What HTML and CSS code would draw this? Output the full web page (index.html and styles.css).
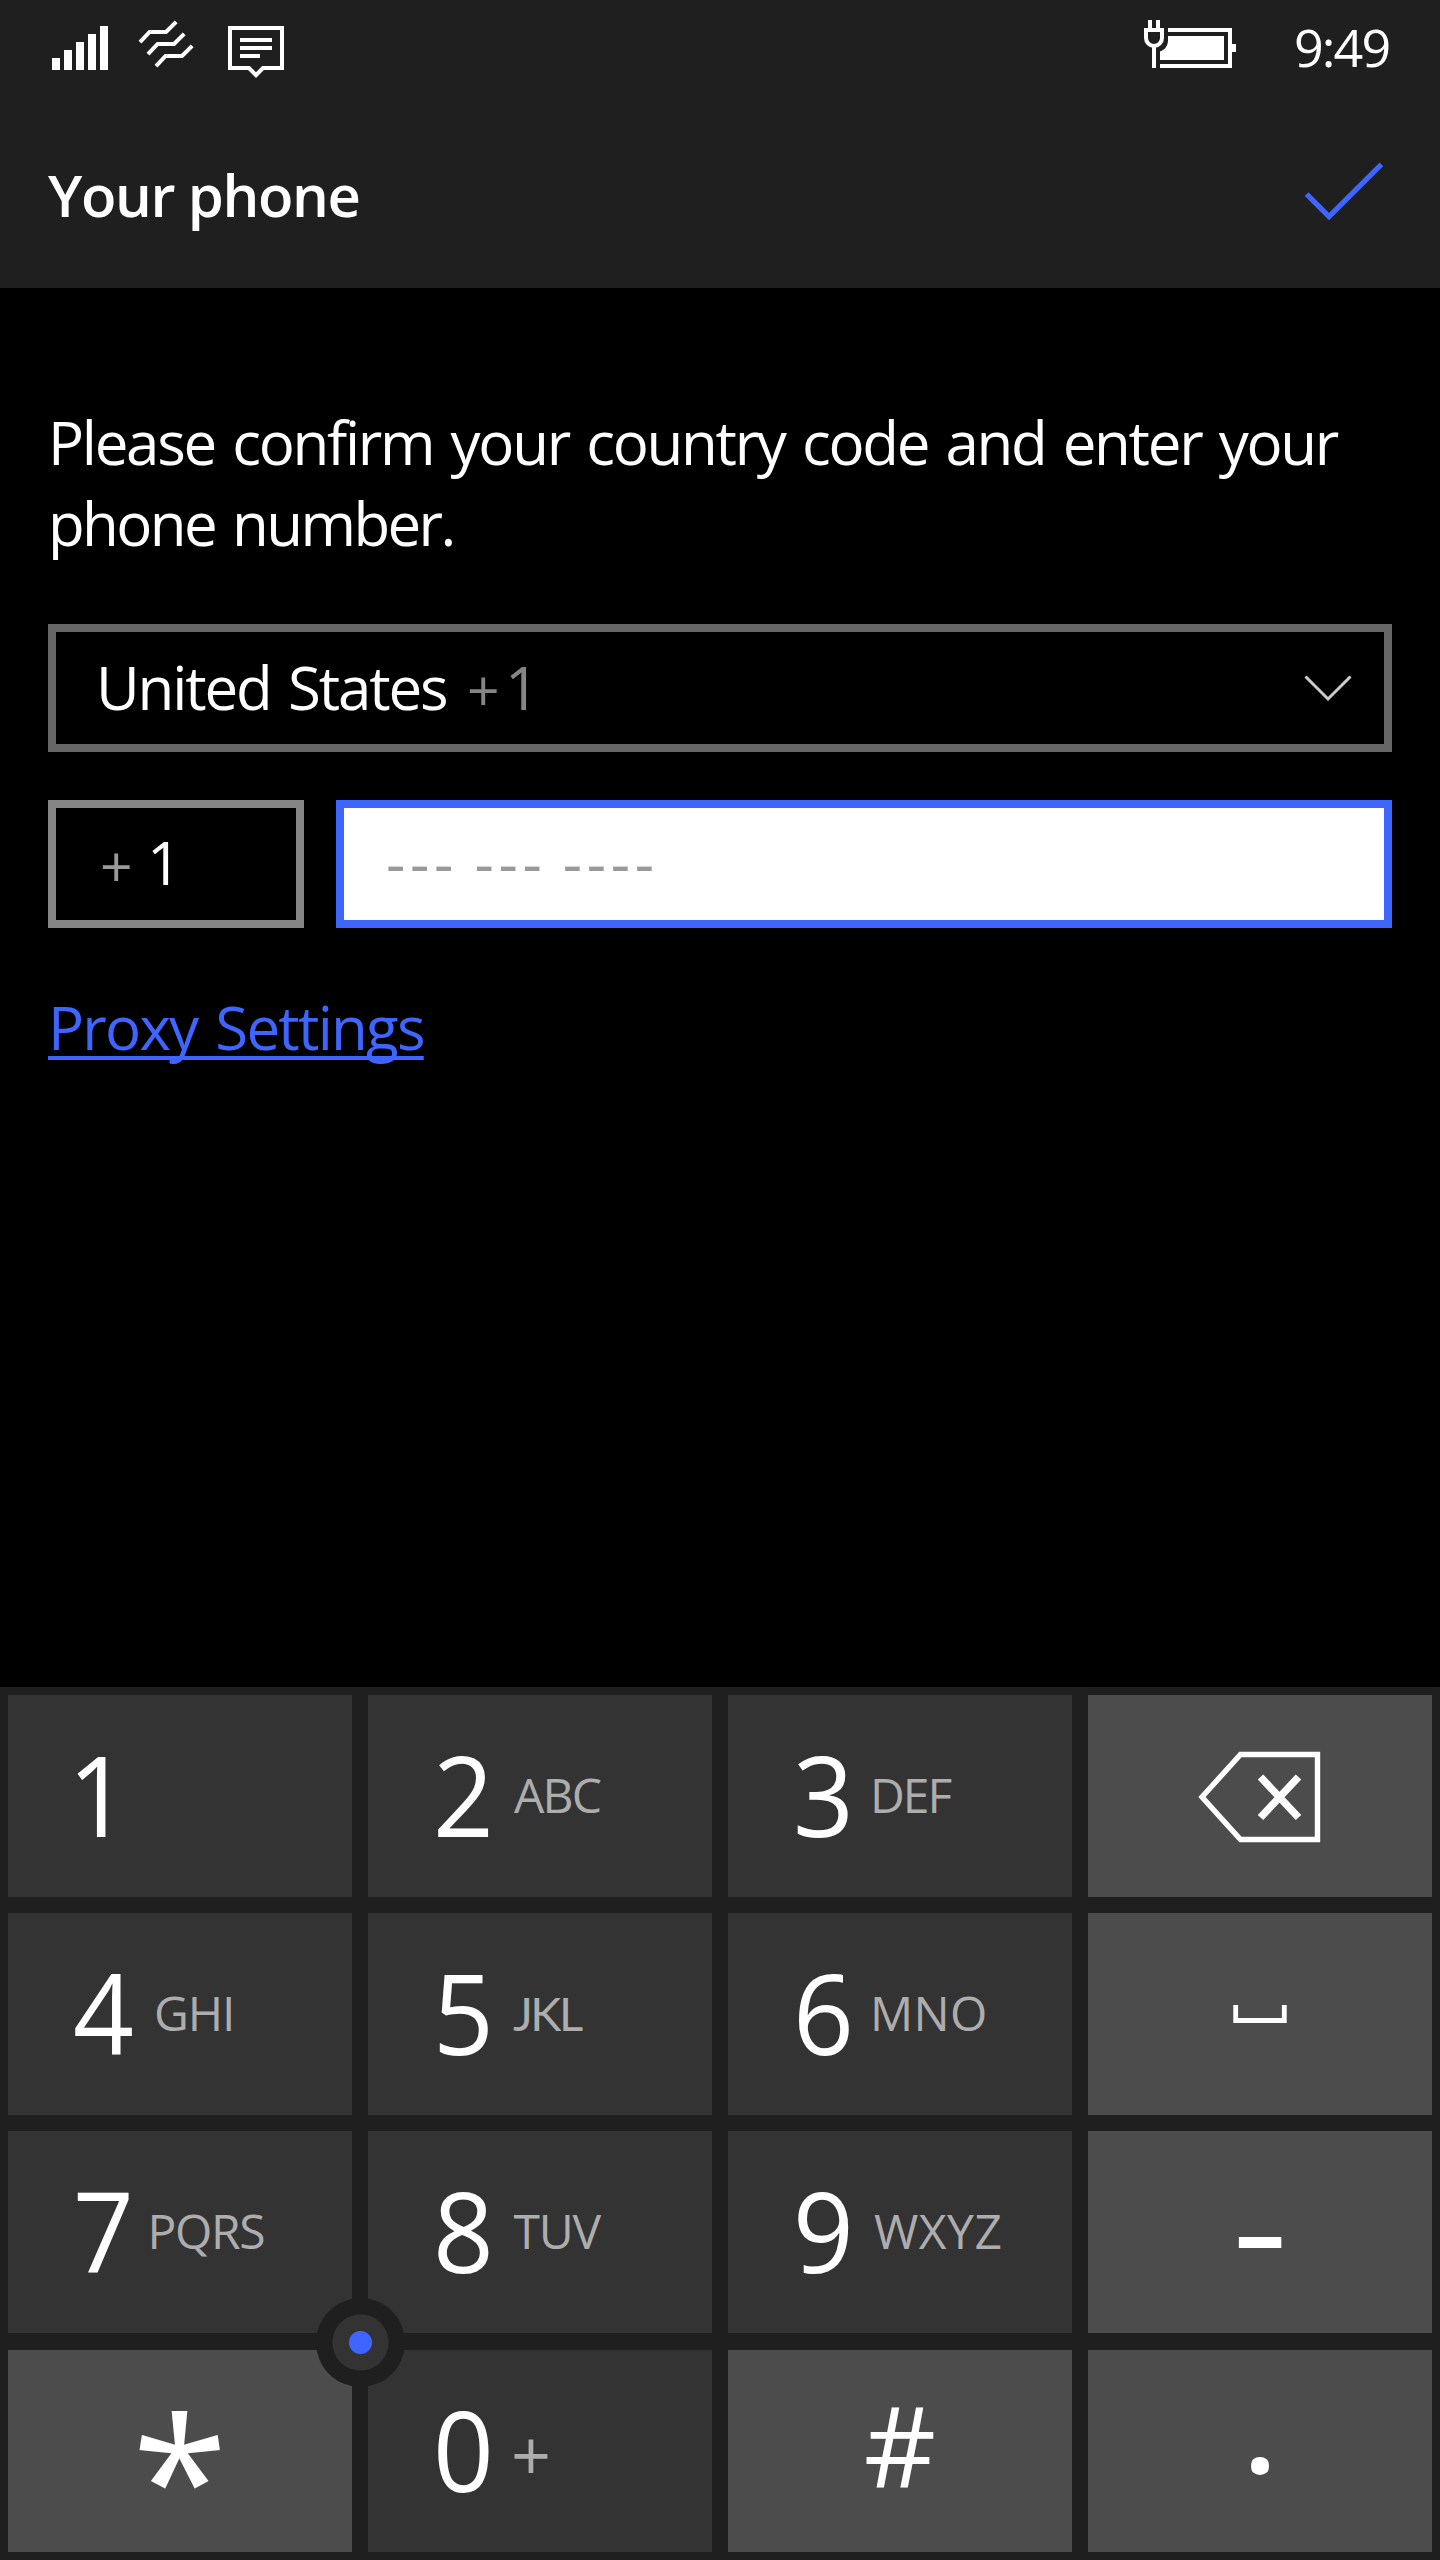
FILE: index.html
```
<!DOCTYPE html>
<html lang="en">
<head>
<meta charset="utf-8">
<title>Your phone</title>
<link rel="stylesheet" href="styles.css">
</head>
<body>
<header class="header">
  <div class="status">
    <svg class="signal" width="56" height="96" viewBox="52 0 56 96" fill="#fff"><path d="M52 58h8v12h-8zM64 50h8v20h-8zM76 42h8v28h-8zM88 34h8v36h-8zM100 26h8v44h-8z"/></svg>
    <svg class="waves" width="56" height="96" viewBox="138 0 56 96" fill="none" stroke="#fff" stroke-width="4"><path d="M140 42.2L149.6 32H166l10.2-10.2M148 54.2l9.6-10.2H174l10.2-10.2M156 66.2l9.6-10.2H182l10.2-10.2"/></svg>
    <svg class="message" width="56" height="96" viewBox="228 0 56 96" fill="none" stroke="#fff" stroke-width="4"><path d="M230 28h52v40h-19l-7 7.2-7-7.2h-19zM240 40h32M240 48h32M240 56h20"/></svg>
    <svg class="battery" width="92" height="96" viewBox="1144 0 92 96" fill="#fff"><path d="M1148 20h4v8h-4zM1156 20h4v8h-4zM1152 47h4v21h-4zM1168 28h64v16h4v8h-4v16h-72v-4h68V32h-60zM1168 36h56v24h-64v-8.500c5-1.500 8-6 8-11z"/><path d="M1146 30h16v8a8 8 0 0 1-16 0z" fill="none" stroke="#fff" stroke-width="4"/></svg>
    <span class="time">9:49</span>
  </div>
  <div class="titlebar">
    <h1 class="title">Your phone</h1>
    <svg width="80" height="60" viewBox="1304 160 80 60" fill="none" stroke="#3e65ff" stroke-width="5.200"><path d="M1306.600 194.200l22.400 22.400 52.400-52.200"/></svg>
  </div>
</header>
<main class="main">
  <p class="prompt">Please confirm your country code and enter your<br><span class="prompt-end">phone number.</span></p>
  <div class="select">
    <span class="country">United States</span><span class="plus">+</span><span class="one">1</span>
    <svg class="chevron" width="48" height="28" viewBox="0 0 48 28" fill="none" stroke="#ccc" stroke-width="3"><path d="M1.500 1.500L24 24 46.500 1.500"/></svg>
  </div>
  <div class="fields">
    <div class="code"><span class="plus">+</span><span class="one">1</span></div>
    <div class="number">--- --- ----</div>
  </div>
  <a class="proxy">Proxy Settings</a>
</main>
<section class="keypad">
  <div class="key"><span class="digit digit-one">1</span></div>
  <div class="key"><span class="digit">2</span><span class="letters abc">ABC</span></div>
  <div class="key"><span class="digit">3</span><span class="letters def">DEF</span></div>
  <div class="key special"><svg class="backspace" width="124" height="92" viewBox="0 0 124 92" fill="none" stroke="#fff"><path d="M42.500 3.500H119.500V88.500H42.500L4 46z" stroke-width="5.400"/><path d="M62.500 26L100.500 66.500M100.500 26L62.500 66.500" stroke-width="7.500"/></svg></div>
  <div class="key"><span class="digit">4</span><span class="letters ghi">GHI</span></div>
  <div class="key"><span class="digit">5</span><span class="letters jkl">JKL</span></div>
  <div class="key"><span class="digit">6</span><span class="letters mno">MNO</span></div>
  <div class="key special"><svg width="54" height="18" viewBox="0 0 54 18" fill="none" stroke="#fff" stroke-width="4.800"><path d="M2.700 0V15.500H51.300V0"/></svg></div>
  <div class="key"><span class="digit">7</span><span class="letters pqrs">PQRS</span></div>
  <div class="key"><span class="digit">8</span><span class="letters tuv">TUV</span></div>
  <div class="key"><span class="digit">9</span><span class="letters wxyz">WXYZ</span></div>
  <div class="key special"><span class="hyphen">-</span></div>
  <div class="key special"><span class="star">*</span></div>
  <div class="key"><span class="digit">0</span><span class="letters zero-plus">+</span></div>
  <div class="key special"><span class="hash">#</span></div>
  <div class="key special"><span class="period">.</span></div>
  <span class="nub"></span>
</section>
</body>
</html>
```
FILE: styles.css
```
* {
  box-sizing: border-box;
}

body {
  margin: 0;
  width: 1440px;
  height: 2560px;
  display: flex;
  flex-direction: column;
  overflow: hidden;
  background: #000;
  color: #fff;
  font: 60px/80px "Open Sans", "Noto Sans", sans-serif;
}

svg {
  display: block;
  flex: none;
}

.header {
  height: 288px;
  background: #1f1f1f;
}

.status {
  height: 96px;
  display: flex;
  padding: 0 46px 0 52px;
}

.waves {
  margin-left: 30px;
}

.message {
  margin-left: 34px;
}

.battery {
  margin-left: auto;
}

.time {
  width: 100px;
  margin-left: 58px;
  font-size: 52px;
  line-height: 94px;
  letter-spacing: -1.9px;
}

.titlebar {
  height: 192px;
  display: flex;
  align-items: center;
  justify-content: space-between;
  padding: 5px 56px 0 48px;
}

.titlebar svg {
  margin-top: -9px;
}

.title {
  margin: 0;
  padding-top: 1px;
  font-size: 58px;
  font-weight: 600;
  letter-spacing: -1.37px;
}

.main {
  flex: 1;
  padding: 114px 48px 0;
}

.prompt {
  margin: 0 0 60px;
  line-height: 81px;
  letter-spacing: -2.28px;
  word-spacing: 4px;
  white-space: nowrap;
}

.prompt-end {
  letter-spacing: -2.6px;
}

.select {
  height: 128px;
  display: flex;
  padding: 0 32px 0 40px;
  border: 8px solid #666;
  line-height: 110px;
}

.country {
  width: 371px;
  letter-spacing: -2.15px;
  word-spacing: 4px;
}

.plus {
  width: 40px;
  margin-top: 2px;
  font-size: 57px;
}

.select .plus,
.select .one {
  color: #858585;
}

.select .plus {
  width: 38px;
}

.chevron {
  margin: 43px 0 0 auto;
}

.fields {
  display: flex;
  gap: 32px;
  margin-top: 48px;
  line-height: 108px;
}

.code {
  width: 256px;
  height: 128px;
  display: flex;
  padding-left: 44px;
  border: 8px solid #858585;
}

.code .plus {
  width: 47px;
  margin-top: 3px;
  color: #999;
}

.number {
  flex: 1;
  height: 128px;
  padding-left: 42px;
  border: 8px solid #3e65ff;
  background: #fff;
  color: #999;
  line-height: 108px;
  letter-spacing: 4.7px;
  word-spacing: -3.9px;
}

.proxy {
  display: inline-block;
  margin-top: 59px;
  color: #3e65ff;
  letter-spacing: -1.75px;
  word-spacing: 4px;
  text-decoration: underline;
  text-decoration-thickness: 4px;
  text-decoration-skip-ink: none;
  text-underline-offset: 6px;
}

.keypad {
  position: relative;
  height: 873px;
  display: grid;
  grid-template-columns: repeat(4, 344px);
  grid-template-rows: repeat(4, 202px);
  gap: 16.2px 16px;
  padding: 8px;
  background: #1f1f1f;
}

.key {
  display: flex;
  align-items: flex-start;
  padding-left: 65px;
  background: #333;
  line-height: 202px;
}

.special {
  justify-content: center;
  padding: 0;
  background: #4c4c4c;
}

.special svg {
  align-self: center;
}

.special .backspace {
  margin-top: 2px;
}

.digit {
  width: 79px;
  margin-top: -2px;
  font-size: 112px;
  transform: scaleX(0.95);
  transform-origin: 0 0;
}

.digit-one {
  margin-left: -5px;
}

.letters {
  margin-top: -1px;
  color: #adadad;
  font-size: 48px;
}

.abc {
  margin-left: 2px;
  letter-spacing: -1.8px;
}

.def {
  margin-left: -2px;
  letter-spacing: -2px;
}

.ghi {
  margin-left: 2px;
  letter-spacing: -1.2px;
}

.jkl {
  margin-left: 1px;
  font-family: Lato, sans-serif;
  font-size: 47px;
  letter-spacing: -2.5px;
}

.mno {
  margin-left: -2px;
  letter-spacing: 0.3px;
}

.pqrs {
  margin-left: -4.5px;
  letter-spacing: -1.4px;
}

.tuv {
  margin-left: 1.5px;
  letter-spacing: -1.2px;
}

.wxyz {
  margin-left: 2px;
  letter-spacing: 0.5px;
}

.zero-plus {
  margin-top: 3px;
  margin-left: -1px;
  font-size: 70px;
}

.hyphen {
  margin-top: -2px;
  font-size: 112px;
  font-weight: 600;
  transform: scaleX(1.5);
}

.star {
  margin-top: 25px;
  font-size: 174px;
}

.hash {
  margin-top: -6px;
  font-size: 112px;
}

.period {
  margin-top: -26px;
  font-size: 124px;
  font-weight: 600;
}

/* Cursor control floating over the corner shared by four keys */
.nub {
  position: absolute;
  left: 315.5px;
  top: 610.5px;
  width: 89px;
  height: 89px;
  border-radius: 50%;
  background: radial-gradient(circle, #3e65ff 11px, #333 12px, #333 27.5px, #1f1f1f 28.5px);
}
```
